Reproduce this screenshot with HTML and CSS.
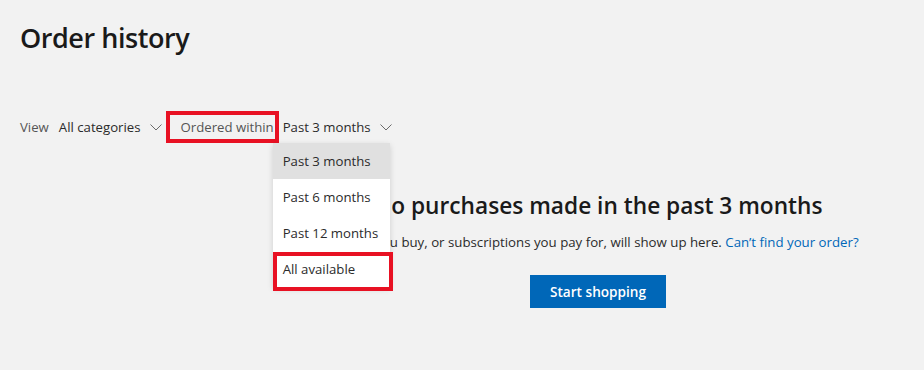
FILE: index.html
```html
<!DOCTYPE html>
<html lang="en">
<head>
    <meta charset="UTF-8">
    <meta name="viewport" content="width=device-width, initial-scale=1.0">
    <title>Order history</title>
    <link rel="stylesheet" href="styles.css">
</head>
<body>
<div class="page">
    <h1>Order history</h1>

    <div class="filters">
        <span class="filter-label">View</span>
        <button class="filter-btn">All categories
            <svg class="chevron" width="12" height="7" viewBox="0 0 12 7"><path d="M0.5 0.5 L6 6 L11.5 0.5" fill="none" stroke="#6b6b6b" stroke-width="1"/></svg>
        </button>
        <span class="filter-label marked">Ordered within</span>
        <div class="period">
            <button class="filter-btn">Past 3 months
                <svg class="chevron" width="12" height="7" viewBox="0 0 12 7"><path d="M0.5 0.5 L6 6 L11.5 0.5" fill="none" stroke="#6b6b6b" stroke-width="1"/></svg>
            </button>
            <ul class="dropdown">
                <li class="selected">Past 3 months</li>
                <li>Past 6 months</li>
                <li>Past 12 months</li>
                <li class="marked-item">All available</li>
            </ul>
        </div>
    </div>

    <div class="empty">
        <h2>No purchases made in the past 3 months</h2>
        <p>Items you buy, or subscriptions you pay for, will show up here. <a href="#">Can’t find your order?</a></p>
        <button class="primary">Start shopping</button>
    </div>
</div>
</body>
</html>
```

FILE: styles.css
```css
body {
    font-family: "Open Sans", "Noto Sans", sans-serif;
    background-color: #f2f2f2;
    color: #1a1a1a;
    margin: 0;
}

.page {
    padding: 20px;
}

h1 {
    margin: 0;
    font-size: 27px;
    font-weight: 600;
    line-height: 36px;
    letter-spacing: -0.45px;
}

.filters {
    display: flex;
    align-items: center;
    margin-top: 54px;
    font-size: 13.2px;
    height: 34px;
}

.filter-label {
    color: #555;
    margin-right: 10px;
}

.filter-btn {
    font: inherit;
    color: #2b2b2b;
    background: none;
    border: none;
    padding: 0;
    display: flex;
    align-items: center;
    gap: 9px;
}

.marked {
    outline: 4px solid #e81123;
    outline-offset: 0;
    padding: 3px 1px 3px 11px;
    margin: 0 8px 0 8px;
}

.period {
    position: relative;
}

.dropdown {
    position: absolute;
    top: 25px;
    left: -10px;
    width: 117px;
    margin: 0;
    padding: 0;
    list-style: none;
    background-color: #fff;
    box-shadow: 0 2px 6px rgba(0, 0, 0, 0.15);
    z-index: 2;
}

.dropdown li {
    height: 36px;
    line-height: 36px;
    padding-left: 10px;
    font-size: 13.2px;
    color: #2b2b2b;
}

.dropdown .selected {
    background-color: #e0e0e0;
}

.dropdown .marked-item {
    position: relative;
}

.marked-item::after {
    content: "";
    position: absolute;
    top: 1px;
    bottom: -4px;
    left: 0;
    right: -3px;
    border: 4px solid #e81123;
}

.empty {
    margin: 46px -20px 0 252px;
    text-align: center;
}

h2 {
    margin: 0;
    font-size: 22.7px;
    font-weight: 600;
    line-height: 32px;
}

.empty p {
    margin: 11px 0 0;
    font-size: 13.25px;
    color: #2b2b2b;
}

.empty a {
    color: #0067b8;
    text-decoration: none;
}

.primary {
    margin-top: 24px;
    font: inherit;
    font-size: 13.6px;
    font-weight: 600;
    color: #fff;
    background-color: #0067b8;
    border: none;
    height: 33px;
    padding: 0 20px;
}
```
